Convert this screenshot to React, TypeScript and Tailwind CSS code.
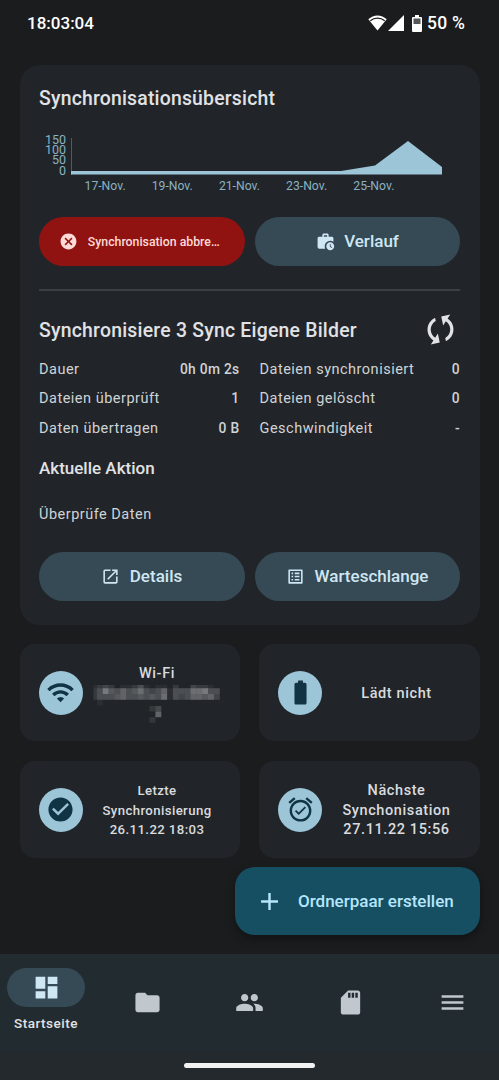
import type { ReactNode } from 'react';
import clsx from 'clsx';
import {
  MdAdd,
  MdAlarmOn,
  MdBatteryFull,
  MdCancel,
  MdCheckCircle,
  MdDashboard,
  MdFolder,
  MdListAlt,
  MdMenu,
  MdOpenInNew,
  MdPeople,
  MdSdCard,
  MdSync,
  MdWifi,
  MdWorkHistory,
} from 'react-icons/md';

const chartTicks = ['150', '100', '50', '0'];
const chartDays = ['17-Nov.', '19-Nov.', '21-Nov.', '23-Nov.', '25-Nov.'];

const leftStats = [
  ['Dauer', '0h 0m 2s'],
  ['Dateien überprüft', '1'],
  ['Daten übertragen', '0 B'],
];

const rightStats = [
  ['Dateien synchronisiert', '0'],
  ['Dateien gelöscht', '0'],
  ['Geschwindigkeit', '-'],
];

// Grey levels of the pixelated network name, 0 = transparent
const mosaic = [
  [1, 2, 3, 2, 0, 1, 1, 2, 4, 1, 0, 1, 1, 0, 2, 0, 0, 3, 2, 2, 1, 0],
  [2, 4, 8, 5, 4, 6, 4, 5, 7, 4, 3, 4, 6, 1, 4, 4, 4, 7, 7, 8, 4, 4],
  [2, 4, 4, 4, 5, 6, 4, 4, 5, 4, 5, 4, 7, 1, 4, 3, 4, 6, 6, 5, 6, 3],
  [0, 1, 0, 0, 0, 0, 0, 0, 0, 0, 0, 0, 0, 0, 0, 0, 0, 0, 0, 0, 0, 0],
];

function StatusBar() {
  return (
    <div className="flex h-[65px] items-start justify-between pt-[11px] pl-[27px] pr-[34px] text-white">
      <span className="text-[17px] leading-6 font-medium">18:03:04</span>
      <div className="flex h-6 items-center">
        <svg className="h-[16px] w-[19px]" viewBox="0 0 19 16">
          <path d="M0.300 4.200C5.500-.9 13.500-.9 18.700 4.200L9.500 15.500z" fill="#fff" />
          <path d="M2.300 5.700C6.500 2.300 12.500 2.300 16.700 5.700" fill="none" stroke="#1a1c1e" strokeWidth="1.300" />
        </svg>
        <svg className="ml-[1px] h-[16px] w-[16px]" viewBox="0 0 16 16">
          <path d="M16 0v16H0z" fill="#fff" />
        </svg>
        <svg className="ml-[8px] h-[17px] w-[10px]" viewBox="0 0 10 17">
          <path d="M3 0h4v2h2a1 1 0 0 1 1 1v13a1 1 0 0 1-1 1H1a1 1 0 0 1-1-1V3a1 1 0 0 1 1-1h2z" fill="#fff" />
          <path d="M1.500 3.500h7v5.500h-7z" fill="#1a1c1e" opacity="0.75" />
        </svg>
        <span className="ml-[5px] text-[17.500px] leading-6 font-medium tracking-[0.2px]">50 %</span>
      </div>
    </div>
  );
}

function Chart() {
  return (
    <div className="mt-[21px] flex h-[70px] text-[12.500px] text-[#8ab2c2]">
      <div className="flex w-[27px] flex-col items-end pt-[2px]">
        {chartTicks.map((tick) => (
          <span key={tick} className="h-[10.200px] leading-[10.200px]">{tick}</span>
        ))}
      </div>
      <div className="ml-[4.500px] w-[371px]">
        <svg className="block h-[42px] w-[371px]" viewBox="0 0 371 42">
          <path d="M.5 5V42" stroke="#4a5c65" />
          <path d="M0 38H270L304 32.500L337 8L371 34V41.500H0z" fill="#9cc5d8" />
        </svg>
        <div className="flex pt-[4px] pl-[1px] text-[12.200px]">
          {chartDays.map((day) => (
            <span key={day} className="w-[67.200px] text-center leading-[14px]">{day}</span>
          ))}
        </div>
      </div>
    </div>
  );
}

function PillButton({ icon, children, danger }: { icon: ReactNode; children: ReactNode; danger?: boolean }) {
  return (
    <button
      className={clsx(
        'flex h-[48.500px] items-center justify-center rounded-full font-medium',
        danger ? 'gap-[10px] bg-[#911311] pr-[5px] text-[12.300px] text-[#ffdad6]' : 'gap-[9.500px] bg-[#354a54] text-[17px] text-[#cfe6f3]',
      )}
    >
      {icon}
      <span className="pt-[1px]">{children}</span>
    </button>
  );
}

function StatList({ rows, className }: { rows: string[][]; className: string }) {
  return (
    <dl className={clsx('flex flex-col', className)}>
      {rows.map(([label, value]) => (
        <div key={label} className="flex h-[29.400px] items-baseline justify-between leading-[29px]">
          <dt className="text-[14.500px] tracking-[0.5px]">{label}</dt>
          <dd className="text-[13.800px] font-medium tracking-[0.3px]">{value}</dd>
        </div>
      ))}
    </dl>
  );
}

function Overview() {
  return (
    <section className="h-[560px] rounded-[20px] bg-[#212529] px-[19.500px] pt-[20px] text-[#e1e2e5]">
      <h1 className="pt-[1px] text-[19.400px] leading-[26px] font-medium tracking-[0.2px]">Synchronisationsübersicht</h1>
      <Chart />
      <div className="mt-[14px] grid grid-cols-2 gap-[10px]">
        <PillButton danger icon={<MdCancel className="size-[19px]" />}>
          Synchronisation abbre…
        </PillButton>
        <PillButton icon={<MdWorkHistory className="size-[19px]" />}>Verlauf</PillButton>
      </div>
      <div className="mt-[23.500px] h-[2px] bg-[#3d4043]" />
      <div className="mt-[19px] flex h-[39px] items-center justify-between">
        <h2 className="pt-[2px] text-[19.400px] leading-[26px] font-medium tracking-[0.230px]">Synchronisiere 3 Sync Eigene Bilder</h2>
        <MdSync className="size-[39px] rotate-33" />
      </div>
      <div className="mt-[6px] flex justify-between text-[#d0d3d6]">
        <StatList rows={leftStats} className="w-[200.500px]" />
        <StatList rows={rightStats} className="w-[200.500px]" />
      </div>
      <h3 className="mt-[13px] text-[17px] leading-6 font-medium">Aktuelle Aktion</h3>
      <p className="mt-[25px] text-[14.500px] leading-5 tracking-[0.5px] text-[#d0d3d6]">Überprüfe Daten</p>
      <div className="mt-[27px] grid grid-cols-2 gap-[10px]">
        <PillButton icon={<MdOpenInNew className="size-[19px]" />}>Details</PillButton>
        <PillButton icon={<MdListAlt className="size-[19px]" />}>Warteschlange</PillButton>
      </div>
    </section>
  );
}

function NetworkName() {
  return (
    <svg className="mt-[1px] h-[38px] w-[128px]" viewBox="0 0 128 38">
      {mosaic.map((row, y) =>
        row.map((level, x) => (
          <rect
            key={`${x}-${y}`}
            x={x === 0 ? 0.5 : x * 5.85 - 2}
            y={y === 0 ? 0 : y * 5.8 - 2.6}
            width={x === 0 ? 3.4 : 5.9}
            height={y === 0 ? 3.2 : 5.8}
            fill="#b9bbbe"
            opacity={level * 0.07}
          />
        )),
      )}
      <path d="M56.500 21h5.900v5.500h-5.900zM56.500 32.200h5.900v5.500h-5.900z" fill="#33383b" />
      <path d="M62.400 21h5.900v5.500h-5.900z" fill="#45494c" />
      <path d="M62.400 26.500h5.900v5.700h-5.900z" fill="#626568" />
    </svg>
  );
}

function StatusTile({ icon, children }: { icon: ReactNode; children: ReactNode }) {
  return (
    <div className="flex h-[97px] items-center rounded-[15px] bg-[#212529] pl-[19px] text-[#d9dbde]">
      <div className="flex size-[44px] shrink-0 items-center justify-center rounded-full bg-[#9cc5d8] text-[#113444]">
        {icon}
      </div>
      <div className="ml-[10.500px] flex w-[128px] flex-col items-center pt-[2px] text-center text-[14.500px] leading-[19.500px] font-medium tracking-[0.6px]">
        {children}
      </div>
    </div>
  );
}

function BottomNav() {
  return (
    <nav className="h-[126px] bg-[#212b30] text-[#c0c7cd]">
      <div className="flex h-[97px]">
        <div className="flex w-[92px] flex-col items-center pt-[14px]">
          <div className="flex h-[39px] w-[78px] items-center justify-center rounded-full bg-[#354a54] text-[#cfe6f3]">
            <MdDashboard className="size-[29px]" />
          </div>
          <span className="mt-[7px] text-[13.500px] leading-[18px] font-medium tracking-[0.5px] text-[#e1e2e5]">Startseite</span>
        </div>
        <div className="flex flex-1 items-center">
          <div className="flex flex-1 justify-center pl-[9px]"><MdFolder className="size-[29px]" /></div>
          <div className="flex flex-1 justify-center pl-[9px]"><MdPeople className="size-[29px]" /></div>
          <div className="flex flex-1 justify-center pl-[9px]"><MdSdCard className="size-[29px]" /></div>
          <div className="flex flex-1 justify-center pl-[9px]"><MdMenu className="size-[29px]" /></div>
        </div>
      </div>
      <div className="flex h-[29px] justify-center bg-[#24292d] pt-[12px]">
        <div className="h-[5px] w-[131px] rounded-full bg-[#f2f2f2]" />
      </div>
    </nav>
  );
}

function App() {
  return (
    <div className="relative flex h-[1080px] w-[499px] flex-col overflow-hidden bg-[#1a1c1e] font-['Roboto','Liberation_Sans',sans-serif]">
      <StatusBar />
      <main className="flex-1 px-[19.500px]">
        <Overview />
        <div className="mt-[19px] grid grid-cols-2 gap-x-[19px] gap-y-[20px]">
          <StatusTile icon={<MdWifi className="size-[29px]" />}>
            <span>Wi-Fi</span>
            <NetworkName />
          </StatusTile>
          <StatusTile icon={<MdBatteryFull className="size-[29px]" />}>Lädt nicht</StatusTile>
          <StatusTile icon={<MdCheckCircle className="size-[29px]" />}>
            <span className="text-[13.200px] tracking-[0.4px]">Letzte Synchronisierung 26.11.22 18:03</span>
          </StatusTile>
          <StatusTile icon={<MdAlarmOn className="size-[29px]" />}>Nächste Synchonisation 27.11.22 15:56</StatusTile>
        </div>
      </main>
      <button className="absolute right-[19px] bottom-[145px] flex h-[68px] w-[245px] items-center rounded-[20px] bg-[#164e62] pl-[20px] text-[17px] font-medium text-[#b5e6fb] shadow-[0_4px_8px_rgba(0,0,0,0.35)]">
        <MdAdd className="size-[29px]" />
        <span className="ml-[14px] pt-[1px]">Ordnerpaar erstellen</span>
      </button>
      <BottomNav />
    </div>
  );
}

export default App;
